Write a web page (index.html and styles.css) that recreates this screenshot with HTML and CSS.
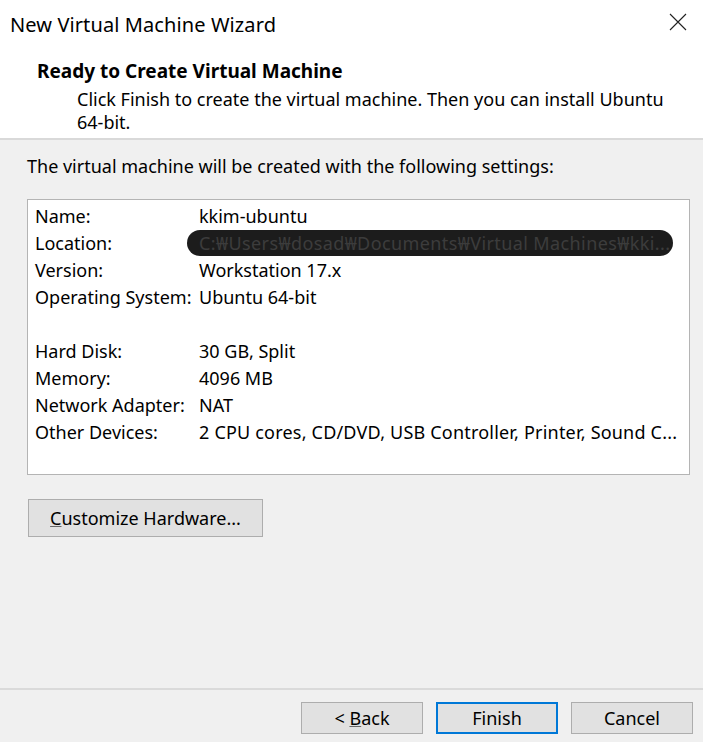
FILE: index.html
```html
<!DOCTYPE html>
<html>
<head>
<meta charset="utf-8">
<link rel="stylesheet" href="styles.css">
</head>
<body>
<div class="window">
  <div class="top">
    <div class="titlebar">
      <span class="title">New Virtual Machine Wizard</span>
      <svg class="close" width="18" height="18" viewBox="0 0 18 18"><path d="M1 1 L17 17 M17 1 L1 17" stroke="#222" stroke-width="1.1" fill="none"/></svg>
    </div>
    <div class="heading">Ready to Create Virtual Machine</div>
    <div class="subheading">Click Finish to create the virtual machine. Then you can install Ubuntu 64-bit.</div>
  </div>
  <div class="content">
    <div class="intro">The virtual machine will be created with the following settings:</div>
    <div class="box">
      <div class="row"><span class="label">Name:</span><span class="value">kkim-ubuntu</span></div>
      <div class="row"><span class="label">Location:</span><span class="value redacted">C:&#8361;Users&#8361;dosad&#8361;Documents&#8361;Virtual Machines&#8361;kki...</span></div>
      <div class="row"><span class="label">Version:</span><span class="value">Workstation 17.x</span></div>
      <div class="row"><span class="label">Operating System:</span><span class="value">Ubuntu 64-bit</span></div>
      <div class="row"></div>
      <div class="row"><span class="label">Hard Disk:</span><span class="value">30 GB, Split</span></div>
      <div class="row"><span class="label">Memory:</span><span class="value">4096 MB</span></div>
      <div class="row"><span class="label">Network Adapter:</span><span class="value">NAT</span></div>
      <div class="row"><span class="label">Other Devices:</span><span class="value wide">2 CPU cores, CD/DVD, USB Controller, Printer, Sound C...</span></div>
    </div>
    <button class="btn customize"><u>C</u>ustomize Hardware...</button>
  </div>
  <div class="footer">
    <button class="btn fbtn">&lt; <u>B</u>ack</button>
    <button class="btn fbtn primary">Finish</button>
    <button class="btn fbtn">Cancel</button>
  </div>
</div>
</body>
</html>
```
FILE: styles.css
```css
html, body {
  margin: 0;
  padding: 0;
}
body {
  width: 703px;
  height: 742px;
  overflow: hidden;
  background: #f0f0f0;
  font-family: "Noto Sans", "Open Sans", sans-serif;
  font-size: 18px;
  color: #000;
}
.window {
  display: flex;
  flex-direction: column;
  height: 742px;
}
.top {
  background: #fff;
  height: 140px;
  border-bottom: 2px solid #d9d9d9;
  box-sizing: border-box;
}
.titlebar {
  height: 48px;
  display: flex;
  align-items: center;
  justify-content: space-between;
  padding: 0 16px 0 10px;
}
.title {
  font-size: 20px;
  letter-spacing: 0.1px;
}
.close {
  display: block;
  margin-top: -4px;
}
.heading {
  font-weight: bold;
  font-size: 19px;
  padding-left: 37px;
  line-height: 23px;
  margin-top: 12px;
}
.subheading {
  padding-left: 77px;
  padding-right: 36px;
  line-height: 23px;
  margin-top: 5px;
}
.content {
  padding: 14px 13px 0 27px;
  flex: 1;
}
.intro {
  line-height: 23px;
  margin-top: 1px;
}
.box {
  margin-top: 21px;
  background: #fff;
  border: 1px solid #b4b4b4;
  height: 276px;
  box-sizing: border-box;
  padding: 3px 0 0 7px;
}
.row {
  height: 27px;
  line-height: 27px;
  display: flex;
  white-space: nowrap;
}
.label {
  width: 164px;
  flex: none;
}
.wide {
  letter-spacing: 0.2px;
}
.redacted {
  background: #1c1c1c;
  color: #3c3c3c;
  border-radius: 13px;
  margin-left: -12px;
  padding-left: 12px;
  width: 474px;
  height: 26px;
  line-height: 26px;
  overflow: hidden;
  letter-spacing: 0.4px;
}
.btn {
  font-family: inherit;
  font-size: 18px;
  color: #000;
  background: #e1e1e1;
  border: 1px solid #adadad;
  margin: 0;
  padding: 0;
  box-sizing: border-box;
}
.btn u {
  text-decoration-color: #666;
}
.customize {
  margin-top: 24px;
  margin-left: 1px;
  width: 235px;
  height: 38px;
}
.footer {
  border-top: 2px solid #dadada;
  height: 54px;
  box-sizing: border-box;
  display: flex;
  justify-content: flex-end;
  gap: 13px;
  padding: 12px 10px 0 0;
}
.fbtn {
  width: 122px;
  height: 32px;
}
.primary {
  border: 2px solid #0078d7;
}
```
